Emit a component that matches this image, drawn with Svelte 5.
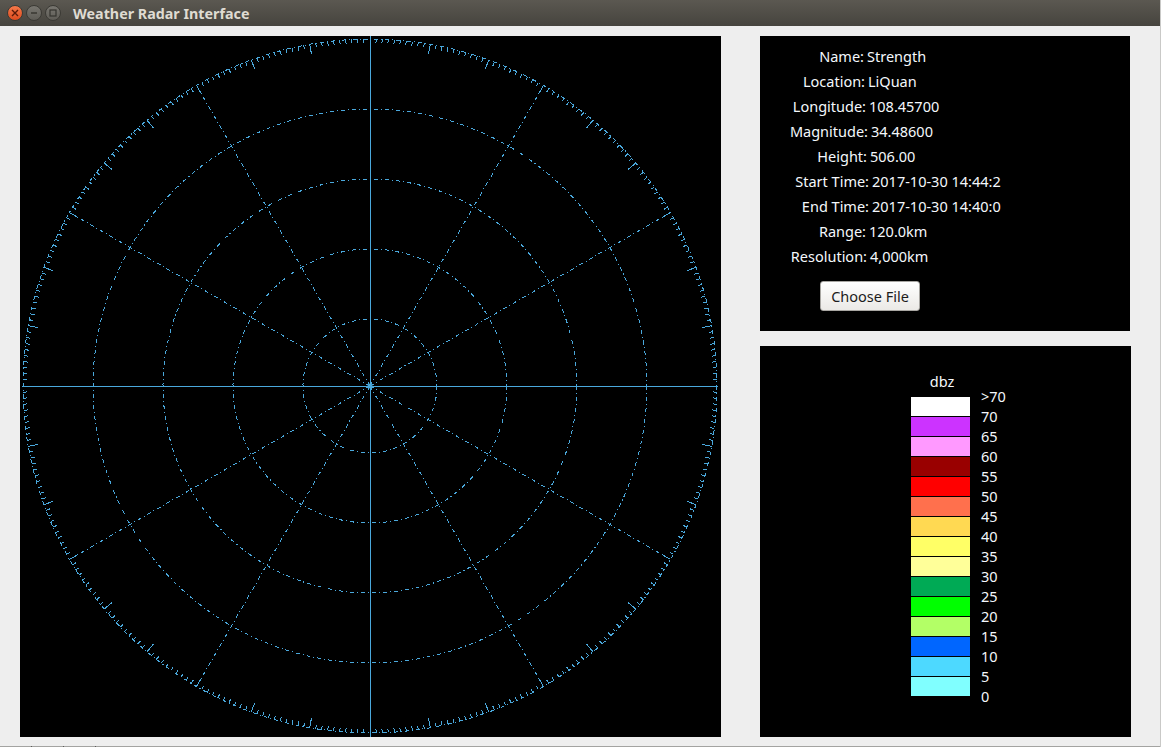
<script>
	const rows = [
		{ label: 'Name:', value: 'Strength', end: 104 },
		{ label: 'Location:', value: 'LiQuan', end: 105 },
		{ label: 'Longitude:', value: '108.45700', end: 106 },
		{ label: 'Magnitude:', value: '34.48600', end: 108 },
		{ label: 'Height:', value: '506.00', end: 107 },
		{ label: 'Start Time:', value: '2017-10-30 14:44:2', end: 109 },
		{ label: 'End Time:', value: '2017-10-30 14:40:0', end: 109 },
		{ label: 'Range:', value: '120.0km', end: 106 },
		{ label: 'Resolution:', value: '4,000km', end: 107 }
	];

	const legend = [
		{ color: '#ffffff', label: '>70' },
		{ color: '#cc33ff', label: '70' },
		{ color: '#ff99ff', label: '65' },
		{ color: '#990000', label: '60' },
		{ color: '#ff0000', label: '55' },
		{ color: '#ff704d', label: '50' },
		{ color: '#ffd952', label: '45' },
		{ color: '#ffff66', label: '40' },
		{ color: '#ffff99', label: '35' },
		{ color: '#00aa55', label: '30' },
		{ color: '#00ff00', label: '25' },
		{ color: '#b3ff66', label: '20' },
		{ color: '#0066ff', label: '15' },
		{ color: '#4dd9ff', label: '10' },
		{ color: '#80ffff', label: '5' }
	];

	// radar geometry, in canvas pixels
	const CX = 350;
	const CY = 350;
	const R = 347;
	const rings = [67, 137, 207, 277, 347];

	function polar(r, deg) {
		const a = (deg * Math.PI) / 180;
		return { x: CX + r * Math.sin(a), y: CY - r * Math.cos(a) };
	}

	const spokes = [30, 60, 120, 150, 210, 240, 300, 330].map((deg) => polar(R, deg));

	const ticks = Array.from({ length: 360 }, (_, deg) => {
		const len = deg % 10 === 0 ? 10 : 4;
		return { from: polar(R, deg), to: polar(R - len, deg) };
	});
</script>

<div class="window">
	<header class="titlebar">
		<div class="controls">
			<span class="ctl close">
				<svg viewBox="0 0 8 8" width="8" height="8">
					<path d="M1 1 7 7M7 1 1 7" stroke="#5a1a08" stroke-width="1.4" />
				</svg>
			</span>
			<span class="ctl">
				<svg viewBox="0 0 8 8" width="8" height="8">
					<path d="M1 4H7" stroke="#35342f" stroke-width="1.4" />
				</svg>
			</span>
			<span class="ctl">
				<svg viewBox="0 0 8 8" width="8" height="8">
					<rect x="1" y="1" width="6" height="6" fill="none" stroke="#35342f" stroke-width="1.2" />
				</svg>
			</span>
		</div>
		<span class="title">Weather Radar Interface</span>
	</header>

	<main class="content">
		<section class="radar">
			<svg viewBox="0 0 701 701" width="701" height="701">
				<g class="dashed">
					{#each rings as r}
						<circle cx={CX} cy={CY} {r} />
					{/each}
					{#each spokes as p}
						<line x1={CX} y1={CY} x2={p.x} y2={p.y} />
					{/each}
				</g>
				<g class="ticks">
					{#each ticks as t}
						<line x1={t.from.x} y1={t.from.y} x2={t.to.x} y2={t.to.y} />
					{/each}
				</g>
				<g class="axes">
					<line x1="350.5" y1="0" x2="350.5" y2="701" />
					<line x1="2" y1="350.5" x2="698" y2="350.5" />
					<circle cx="350" cy="350" r="2.5" />
				</g>
			</svg>
		</section>

		<aside class="side">
			<section class="info">
				{#each rows as row}
					<div class="row">
						<span class="label" style="width: {row.end}px">{row.label}</span>
						<span class="value">{row.value}</span>
					</div>
				{/each}
				<button class="choose">Choose File</button>
			</section>

			<section class="scale">
				<div class="scale-title">dbz</div>
				<div class="scale-body">
					<div class="swatches">
						{#each legend as item}
							<div class="swatch" style="background: {item.color}"></div>
						{/each}
					</div>
					<div class="ticks-col">
						{#each legend as item}
							<span>{item.label}</span>
						{/each}
						<span>0</span>
					</div>
				</div>
			</section>
		</aside>
	</main>

	<footer class="edge">
		<span></span>
		<span></span>
		<span></span>
	</footer>
</div>

<style>
	:global(body) {
		background: #eeeeee;
	}

	.window {
		width: 1161px;
		height: 747px;
		box-sizing: border-box;
		border-right: 1px solid #c9c9c7;
		overflow: hidden;
		font-family: 'Noto Sans', 'Open Sans', sans-serif;
		font-size: 14.5px;
		color: #f4f8fc;
	}

	.titlebar {
		height: 26px;
		box-sizing: border-box;
		display: flex;
		align-items: center;
		padding-left: 7px;
		background: linear-gradient(#5b5851, #46443e);
	}

	.controls {
		display: flex;
		gap: 3px;
	}

	.ctl {
		width: 16px;
		height: 16px;
		box-sizing: border-box;
		border-radius: 50%;
		border: 1px solid #3b3a35;
		background: linear-gradient(#787670, #5e5c56);
		display: flex;
		align-items: center;
		justify-content: center;
	}

	.close {
		background: linear-gradient(#f5794a, #dd4b1e);
	}

	.title {
		margin-left: 12px;
		font-size: 14.3px;
		font-weight: 700;
		color: #dfdbd2;
	}

	.content {
		display: flex;
		padding: 10px 0 0 20px;
	}

	.radar {
		width: 701px;
		height: 701px;
		background: #000;
	}

	.radar svg {
		display: block;
	}

	.dashed {
		fill: none;
		stroke: #4aa8dc;
		stroke-width: 1;
		stroke-dasharray: 4 3 1 3;
		shape-rendering: crispEdges;
	}

	.ticks line {
		stroke: #4aa8dc;
		stroke-width: 1;
		shape-rendering: crispEdges;
	}

	.axes line {
		stroke: #4aa8dc;
		stroke-width: 1;
		shape-rendering: crispEdges;
	}

	.axes circle {
		fill: #4aa8dc;
	}

	.side {
		margin-left: 39px;
		display: flex;
		flex-direction: column;
		gap: 15px;
	}

	.info {
		width: 370px;
		height: 295px;
		box-sizing: border-box;
		background: #000;
		padding-top: 7px;
	}

	.row {
		height: 25px;
		display: flex;
		align-items: center;
		gap: 3px;
		white-space: nowrap;
	}

	.label {
		text-align: right;
		flex: none;
	}

	.choose {
		display: block;
		margin: 13px 0 0 60px;
		width: 100px;
		height: 30px;
		padding: 0;
		border: 1px solid #a8a6a2;
		border-radius: 3px;
		background: linear-gradient(#ffffff, #ebe9e6);
		font-family: inherit;
		font-size: 14.5px;
		color: #1c1c1c;
	}

	.scale {
		width: 371px;
		height: 391px;
		box-sizing: border-box;
		background: #000;
		padding-top: 25px;
		display: flex;
		flex-direction: column;
		align-items: flex-start;
	}

	.scale-title {
		width: 60px;
		margin-left: 152px;
		height: 20px;
		line-height: 20px;
		text-align: center;
	}

	.scale-body {
		display: flex;
		margin-left: 151px;
		margin-top: 6px;
	}

	.swatches {
		width: 59px;
		display: flex;
		flex-direction: column;
	}

	.swatch {
		height: 19px;
		margin-bottom: 1px;
	}

	.ticks-col {
		margin-left: 11px;
		margin-top: -11px;
		display: flex;
		flex-direction: column;
	}

	.ticks-col span {
		height: 20px;
		line-height: 20px;
	}

	.edge {
		margin-top: 9px;
		height: 1px;
		display: flex;
		background: #a3a3a1;
	}

	.edge span {
		width: 1px;
		height: 1px;
		margin-left: 31px;
		background: #5c5c5a;
	}
</style>
